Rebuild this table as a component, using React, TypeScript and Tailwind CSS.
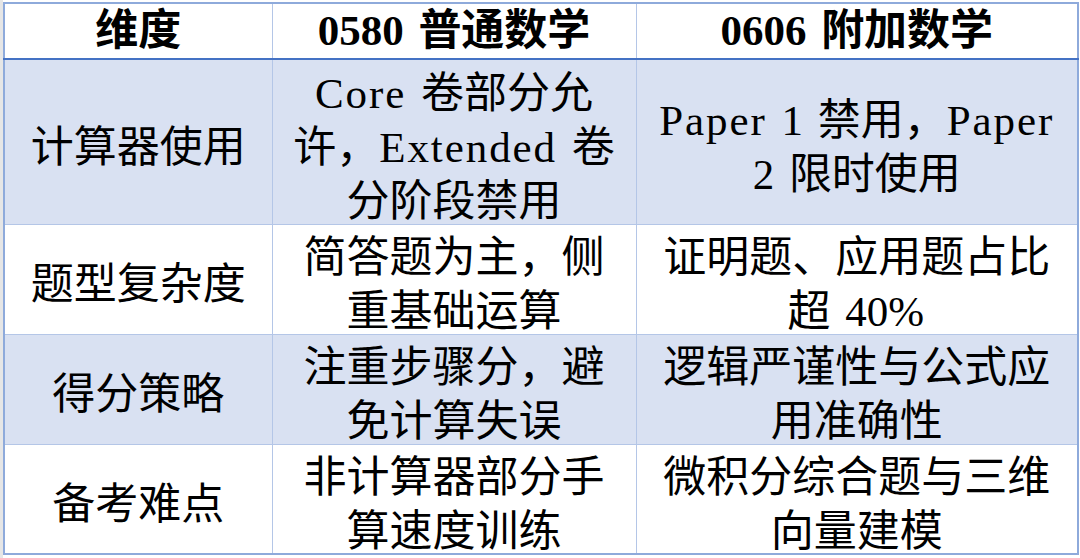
import React from "react";

const rows = [
  {
    key: "计算器使用",
    a: ["Core 卷部分允", "许，Extended 卷", "分阶段禁用"],
    b: ["Paper 1 禁用，Paper", "2 限时使用"],
    fill: true,
    h: "h-[165px]",
  },
  {
    key: "题型复杂度",
    a: ["简答题为主，侧", "重基础运算"],
    b: ["证明题、应用题占比", "超 40%"],
    fill: false,
    h: "h-[110px]",
  },
  {
    key: "得分策略",
    a: ["注重步骤分，避", "免计算失误"],
    b: ["逻辑严谨性与公式应", "用准确性"],
    fill: true,
    h: "h-[110px]",
    mark: true,
  },
  {
    key: "备考难点",
    a: ["非计算器部分手", "算速度训练"],
    b: ["微积分综合题与三维", "向量建模"],
    fill: false,
    h: "h-[110px]",
  },
];

// latin runs get a little tracking so they sit closer to the half-width look
function Mixed({ text }: { text: string }) {
  const parts = text.split(/([A-Za-z%]+)/);
  return (
    <>
      {parts.map((p, i) =>
        /^[A-Za-z%]+$/.test(p) ? (
          <span key={i} className="tracking-[0.045em]">
            {p}
          </span>
        ) : (
          <React.Fragment key={i}>{p}</React.Fragment>
        )
      )}
    </>
  );
}

function Cell({ lines }: { lines: string[] }) {
  return (
    <div className="mt-[6px] -mb-[6px]">
      {lines.map((l, i) => (
        <div key={i} className="whitespace-nowrap">
          <Mixed text={l} />
        </div>
      ))}
    </div>
  );
}

export default function App() {
  return (
    <div
      className="flex w-[1080px] h-[558px] bg-white text-black overflow-hidden"
      style={{ fontFamily: '"Liberation Serif", "Noto Sans CJK SC", serif', wordSpacing: "0.25em" }}
    >
      <div className="w-[3px] h-full bg-[#e6e6e6]" />
      <div className="pt-[2px]">
        <table className="table-fixed border-collapse border-2 border-[#8eaadb] text-[43px] leading-[54px]">
          <colgroup>
            <col className="w-[268px]" />
            <col className="w-[364px]" />
            <col className="w-[442px]" />
          </colgroup>
          <thead>
            <tr className="h-[56px] border-b-2 border-[#4472c4]">
              <th className="border-x border-[#b4c6e7] text-center align-middle font-bold">维度</th>
              <th className="border-x border-[#b4c6e7] text-center align-middle font-bold">0580 普通数学</th>
              <th className="border-x border-[#b4c6e7] text-center align-middle font-bold">0606 附加数学</th>
            </tr>
          </thead>
          <tbody>
            {rows.map((r) => (
              <tr key={r.key} className={`${r.h} ${r.fill ? "bg-[#d9e1f2]" : "bg-white"}`}>
                <td
                  className={`border border-[#b4c6e7] text-center align-middle ${
                    r.mark ? "border-l-[#70ad47]" : ""
                  }`}
                >
                  <Cell lines={[r.key]} />
                </td>
                <td className="border border-[#b4c6e7] text-center align-middle">
                  <Cell lines={r.a} />
                </td>
                <td className="border border-[#b4c6e7] text-center align-middle">
                  <Cell lines={r.b} />
                </td>
              </tr>
            ))}
          </tbody>
        </table>
      </div>
    </div>
  );
}
